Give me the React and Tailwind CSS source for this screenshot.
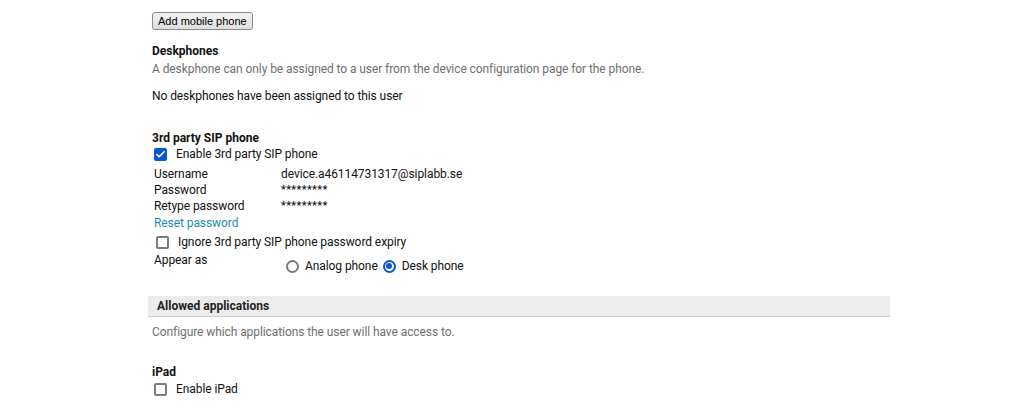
import { Check } from "lucide-react";

function Box({ checked, className = "" }) {
  return checked ? (
    <span className={`flex h-[13px] w-[13px] items-center justify-center rounded-[2px] bg-[#0b57d0] ${className}`}>
      <Check className="h-[11px] w-[11px] text-white" strokeWidth={3.5} />
    </span>
  ) : (
    <span className={`h-[13px] w-[13px] rounded-[2px] border-2 border-[#7a7a85] bg-white ${className}`} />
  );
}

function Radio({ checked }) {
  return checked ? (
    <span className="flex h-[13px] w-[13px] items-center justify-center rounded-full border-2 border-[#0b57d0]">
      <span className="h-[6px] w-[6px] rounded-full bg-[#0b57d0]" />
    </span>
  ) : (
    <span className="h-[13px] w-[13px] rounded-full border-2 border-[#7a7a85]" />
  );
}

export default function App() {
  return (
    <div className="min-h-[413px] bg-white font-['Roboto',sans-serif] text-[12px] leading-[16px] tracking-[-0.08px] text-[#111]">
      <div className="ml-[148px] w-[742px] pt-[12px]">
        <div className="pl-[4px]">
          <button className="h-[18px] rounded-[3px] border border-[#8a8a8a] bg-gradient-to-b from-[#f4f4f4] to-[#dedede] px-[5px] font-['Liberation_Sans',sans-serif] text-[11px] leading-[14px] tracking-normal text-black">
            Add mobile phone
          </button>

          <div className="mt-[13px] font-bold leading-[16px] tracking-normal">Deskphones</div>
          <div className="mt-[2px] text-[#6f6f6f]">A deskphone can only be assigned to a user from the device configuration page for the phone.</div>
          <div className="mt-[11px]">No deskphones have been assigned to this user</div>

          <div className="mt-[26px] font-bold leading-[16px] tracking-normal">3rd party SIP phone</div>
          <label className="flex items-center gap-[9px] pl-[2px]">
            <Box checked />
            <span>Enable 3rd party SIP phone</span>
          </label>
          <div className="mt-[4px] grid grid-cols-[127px_1fr] pl-[2px]">
            <span>Username</span>
            <span>device.a46114731317@siplabb.se</span>
            <span>Password</span>
            <span className="text-[11px] font-medium tracking-[0.3px]">*********</span>
            <span>Retype password</span>
            <span className="text-[11px] font-medium tracking-[0.3px]">*********</span>
          </div>
          <div className="mt-[1px] pl-[2px] text-[#1a8cb0]">Reset password</div>
          <label className="mt-[3px] flex items-center gap-[9px] pl-[4px]">
            <Box />
            <span>Ignore 3rd party SIP phone password expiry</span>
          </label>
          <div className="mt-[2px] flex pl-[2px]">
            <span className="w-[132px]">Appear as</span>
            <div className="mt-[6px] flex items-center">
              <Radio />
              <span className="ml-[6px]">Analog phone</span>
              <span className="ml-[5px]"><Radio checked /></span>
              <span className="ml-[6px]">Desk phone</span>
            </div>
          </div>
        </div>

        <div className="mt-[22px] border-b border-[#cccccc] bg-[#ececec] px-[9px] pb-[2px] pt-[2px] font-bold leading-[16px] tracking-normal text-[#222]">
          Allowed applications
        </div>
        <div className="mt-[7px] pl-[4px] text-[#6f6f6f]">Configure which applications the user will have access to.</div>

        <div className="pl-[4px]">
          <div className="mt-[24px] font-bold leading-[16px] tracking-normal">iPad</div>
          <label className="mt-[1px] flex items-center gap-[9px] pl-[2px]">
            <Box />
            <span>Enable iPad</span>
          </label>
        </div>
      </div>
    </div>
  );
}
